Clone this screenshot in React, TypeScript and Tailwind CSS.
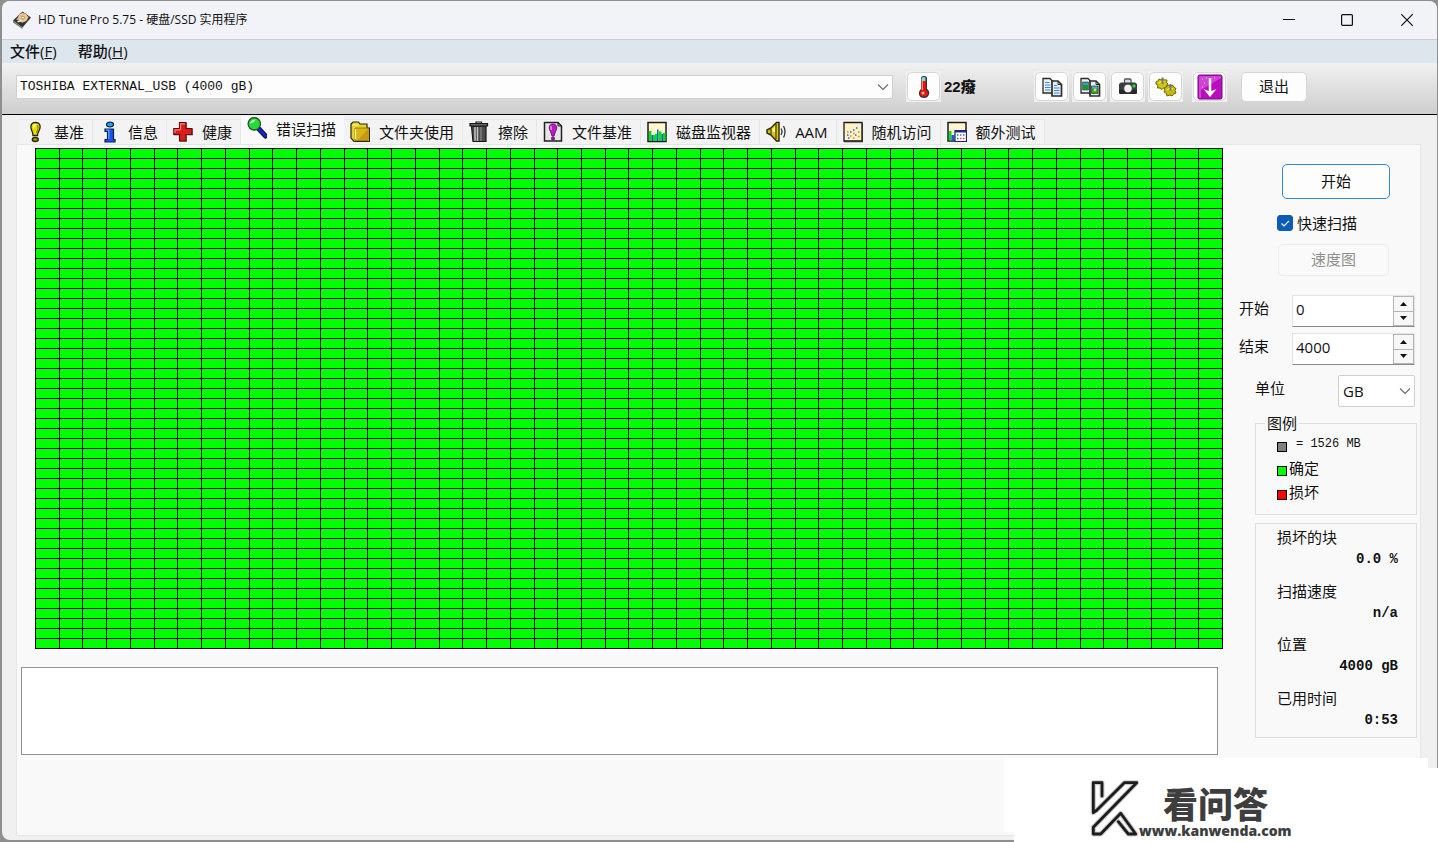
import { useState } from 'react';
import type { ReactNode } from 'react';

const COLS = 50;
const ROWS = 50;

/* ---------- toolbar / title icons ---------- */

function DiskIcon() {
    return (
        <svg width="18" height="18" viewBox="0 0 18 18">
            <path d="M0 9.500 L9.500 .5 L18 6.500 L9.500 16.500 Z" fill="#333" />
            <path d="M0 9.500 L9.500 16.500 V18 L0 11.500 Z" fill="#777" />
            <path d="M3 8.500 L9.500 1.500 L16 6.200 L9.500 12 Z" fill="#a9a49b" />
            <ellipse cx="10" cy="6.600" rx="4.800" ry="4.300" fill="#f0c48a" />
            <ellipse cx="10" cy="6.600" rx="1.500" ry="1.400" fill="#fff" stroke="#a6783d" strokeWidth=".8" />
            <path d="M4.500 11 L8.500 9.500" stroke="#fff" strokeWidth="1.300" />
        </svg>
    );
}

function ThermometerIcon() {
    return (
        <svg width="16" height="24" viewBox="0 0 16 24">
            <path d="M5 3 Q5 1 8 1 Q11 1 11 3 V14 Q14 16 13 19.500 Q11.500 23 8 23 Q4 23 3 19.500 Q2.500 16 5 14 Z" fill="#333" />
            <path d="M5.500 3 Q7 1.500 9.500 2.500 V7 H5.500 Z" fill="#7fd6dc" />
            <path d="M5.500 6 H9.800 V15 Q12.500 16.500 12 19 Q10.800 21.800 8 21.800 Q5 21.800 4 19 Q3.600 16.500 5.500 15 Z" fill="#e3170d" />
            <path d="M5.500 6 H7 V15 H5.500 Z" fill="#ff7a6a" />
            <circle cx="7" cy="18" r="1.500" fill="#ffb3aa" />
        </svg>
    );
}

function CopyIcon({ picture = false }: { picture?: boolean }) {
    return (
        <svg width="22" height="22" viewBox="0 0 22 22">
            <path d="M2 2.500 H9 L12 5.500 V17 H2 Z" fill="#eef1f4" stroke="#2c2c2c" strokeWidth="1.300" />
            <path d="M11 5 H17 L20.500 8.500 V20 H11 Z" fill="#e9edf1" stroke="#2c2c2c" strokeWidth="1.700" />
            <path d="M17 5 V8.500 H20.500" fill="none" stroke="#2c2c2c" />
            {picture ? (
                <>
                    <path d="M3.500 6 H9.500 V14 H3.500 Z" fill="#0e9d26" stroke="#555" strokeWidth=".7" />
                    <path d="M4 7 H9 V9 H4 Z" fill="#3894ef" />
                    <path d="M12.500 10 H19 V17.500 H12.500 Z" fill="#13b42b" stroke="#333" strokeWidth=".7" />
                    <path d="M13 10.500 H18.500 V12.500 H13 Z" fill="#4aa3f5" />
                    <circle cx="16" cy="14" r="1.400" fill="#f5d532" />
                    <path d="M17.500 15.500 L19 14.500 V17 Z" fill="#e32" />
                </>
            ) : (
                <>
                    <path d="M4 6.500 H8.500 M4 9 H9.500 M4 11.500 H9.500 M4 14 H9.500" stroke="#2f8ae0" strokeWidth="1.200" />
                    <path d="M13 9.500 H16 M13 12 H18.500 M13 14.500 H18.500 M13 17 H18.500" stroke="#2f8ae0" strokeWidth="1.200" />
                </>
            )}
        </svg>
    );
}

function CameraIcon() {
    return (
        <svg width="22" height="22" viewBox="0 0 22 22">
            <path d="M7.500 7 V4 Q7.500 3 8.500 3 H13 Q14 3 14 4 V7" fill="#ddd" stroke="#555" strokeWidth="1.300" />
            <path d="M2 8 L4 6.500 H18 L20 8 V17 L19 18 H3 L2 17 Z" fill="#3a3d3d" />
            <path d="M2 14 H20 V17 L19 18 H3 L2 17 Z" fill="#262828" />
            <circle cx="11" cy="12.500" r="4.600" fill="#555" />
            <circle cx="11" cy="12.500" r="3.700" fill="#f7f7f7" />
            <circle cx="17" cy="10" r="1.700" fill="#19e031" />
        </svg>
    );
}

function GearsIcon() {
    return (
        <svg width="22" height="22" viewBox="0 0 22 22">
            <g stroke="#6c6700" strokeWidth="1">
                <path d="M1 6 L3 5 L4 3 L6 4 L8 2.500 L9.500 4 L12 4 L11.500 6.500 L13 8 L11.500 10 L11 12.500 L8.500 12 L7 13.500 L5 12 L2.500 12 L3 9.500 L1 8 Z" fill="#cfc410" />
                <path d="M9 12 L11.500 11 L13 9 L15 10 L17.500 9 L18.500 11 L21 12.500 L20 14.500 L21 17 L18.500 18 L17 20 L15 19 L12 20 L11.500 17.500 L9 16 L10 14 Z" fill="#c5bb0c" />
            </g>
            <path d="M4 7 Q6 5 9 6 M12 14 Q15 11.500 18 13" fill="none" stroke="#f3ef6d" strokeWidth="1.300" />
            <path d="M7.500 1.500 V8" stroke="#777" strokeWidth="2" />
            <path d="M15.500 8 V14.500" stroke="#777" strokeWidth="2" />
        </svg>
    );
}

function DownloadIcon() {
    return (
        <svg width="26" height="26" viewBox="0 0 26 26">
            <rect x="1" y="1" width="24" height="24" rx="1.500" fill="#b70fc0" stroke="#740a7c" />
            <path d="M2 2 H24 V4 L4 16 V24 H2 Z" fill="#d658dc" opacity=".75" />
            <path d="M5 5 h1 M9 4 h1 M7 9 h1 M5 13 h1 M17 4 h1" stroke="#f4b9f6" strokeWidth="1" />
            <path d="M13 4 V18" stroke="#fff" strokeWidth="2.500" />
            <path d="M6.500 15 L13 17.500 L19.500 15 L13 23 Z" fill="#fff" />
        </svg>
    );
}

/* ---------- tab icons, all 20x22 ---------- */

function TabSvg({ children }: { children: ReactNode }) {
    return (
        <svg width="20" height="22" viewBox="0 0 20 22" className="shrink-0">
            {children}
        </svg>
    );
}

const BulbIcon = (
    <TabSvg>
        <path d="M10.500 1.500 C6.500 1.500 5.500 4 6 7 C6.500 10 8 11 8 14.500 H12.500 C12.500 11 14.500 10 15 7 C15.500 4 14.500 1.500 10.500 1.500 Z" fill="#e8dc08" stroke="#26240a" strokeWidth="1.300" />
        <path d="M8 4 Q9.500 2.500 11 3.500 L9 8 Z" fill="#fffba0" />
        <path d="M12.500 4 Q14 8 11.500 12" fill="none" stroke="#98900a" strokeWidth="1.300" />
        <ellipse cx="10.300" cy="18.500" rx="3" ry="2" fill="#a39b0b" stroke="#26240a" strokeWidth="1.300" />
    </TabSvg>
);

const InfoIcon = (
    <TabSvg>
        <ellipse cx="11" cy="3.500" rx="3.500" ry="2.300" fill="#19a8f2" stroke="#14264d" strokeWidth="1.200" />
        <path d="M6 8 H14.500 V18.500 H16 V21 H6 V18.500 H8.500 V10.500 H6 Z" fill="#1e52ee" stroke="#10214a" strokeWidth="1.200" />
        <path d="M7 9 H9.800 V18" fill="none" stroke="#47b5ff" strokeWidth="1.200" />
    </TabSvg>
);

const HealthIcon = (
    <TabSvg>
        <path d="M7 2 H14 V8 H20 V14.500 H14 V21 H7 V14.500 H1 V8 H7 Z" fill="#555" opacity=".6" />
        <path d="M6.500 1.500 H13 V7.500 H19 V13.500 H13 V20 H6.500 V13.500 H.8 V7.500 H6.500 Z" fill="#dd1c1c" stroke="#5b0d0d" strokeWidth="1.200" />
        <path d="M7.500 8.500 V2.800 H12 M2 12 V8.800 H7.500" fill="none" stroke="#ff7e76" strokeWidth="1.200" />
    </TabSvg>
);

const SearchIcon = (
    <TabSvg>
        <path d="M12 12 L18.500 19" stroke="#151526" strokeWidth="5" strokeLinecap="round" />
        <path d="M12 12 L18.300 18.800" stroke="#1522cf" strokeWidth="3" strokeLinecap="round" />
        <circle cx="7.300" cy="6.800" r="6.200" fill="#28d93a" stroke="#24532a" strokeWidth="1.300" />
        <path d="M3 6.500 Q4 2.500 8.500 2.500 Q7 6 3 6.500 Z" fill="#b9ffbf" />
    </TabSvg>
);

const FolderIcon = (
    <TabSvg>
        <path d="M1 3 L3 1 H8.500 L10 3 H17 V7 H19.500 V20.500 H4 L1 17 Z" fill="#e6d22b" stroke="#2c270a" strokeWidth="1.200" />
        <path d="M5 7 H18 V19.500 H5 Z" fill="#d9b51d" stroke="#8b7410" strokeWidth=".8" />
        <path d="M2.500 4 H8.500 M5.500 8 V18" stroke="#fff6a0" strokeWidth="1.200" />
        <path d="M17 9 L8 19 H17.500 Z" fill="#c39a12" />
    </TabSvg>
);

const TrashIcon = (
    <TabSvg>
        <path d="M2.500 5 H17 V20.500 H4 Z" fill="#4c4c4c" stroke="#161616" strokeWidth="1.200" />
        <path d="M6 6 V20 M8.500 6 V20" stroke="#c2c2c2" strokeWidth="1.500" />
        <path d="M12 6 V20" stroke="#8a8a8a" strokeWidth="1.300" />
        <path d="M1 2.500 H18.500 V5 H1 Z" fill="#666" stroke="#161616" strokeWidth="1.200" />
        <path d="M7 2.500 V1 H12.500 V2.500" fill="none" stroke="#161616" strokeWidth="1.200" />
    </TabSvg>
);

const FileBenchIcon = (
    <TabSvg>
        <path d="M1.500 1.500 H15 L18.500 5 V20 H1.500 Z" fill="#e6e6e6" stroke="#222" strokeWidth="1.500" />
        <path d="M15 1.500 V5 H18.500" fill="none" stroke="#222" />
        <path d="M10 3 C5.500 3 5.500 8 7.500 10.500 L9 15 H11 L12.500 10.500 C14.500 8 14.500 3 10 3 Z" fill="#c316c9" stroke="#4e0b52" strokeWidth=".8" />
        <path d="M8 5 V9" stroke="#f3a9f5" strokeWidth="1.300" />
        <circle cx="10" cy="17.500" r="1.700" fill="#a30fa9" stroke="#4e0b52" strokeWidth=".6" />
    </TabSvg>
);

const MonitorIcon = (
    <TabSvg>
        <path d="M1 1.500 H19 V20.500 H1 Z" fill="#fdf8cc" stroke="#1c1c1c" strokeWidth="1.500" />
        <path d="M2 10 H4.500 V20 H2 Z M8 13 H10 V20 H8 Z M12 10.500 H14.500 V20 H12 Z M16 12 H18.500 V20 H16 Z" fill="#00df19" />
        <path d="M4.500 14 H6 V20 H4.500 Z M10 8.500 H11.500 V20 H10 Z M14.500 13 H16 V20 H14.500 Z" fill="#1556ed" />
        <path d="M6 14 H8 V20 H6 Z M11.500 10.500 H12.500 V20 H11.500 Z" fill="#00df19" />
    </TabSvg>
);

const SpeakerIcon = (
    <TabSvg>
        <path d="M1 9 L5 7 L10.500 1.500 H13 V20 H10.500 L5 14 L1 12 Z" fill="#d9c60b" stroke="#29250a" strokeWidth="1.400" />
        <path d="M5 8 V13.500 M10 3 V18" stroke="#29250a" />
        <path d="M6.500 8 L9 5.500 V11 H6.500 Z" fill="#fff694" />
        <path d="M15 7.500 Q17 10.500 15 14 M17.500 5 Q20.500 10.500 17.500 16.500" fill="none" stroke="#333" strokeWidth="1.300" />
    </TabSvg>
);

const RandomIcon = (
    <TabSvg>
        <path d="M1 1.500 H19 V20 H1 Z" fill="#fdf3c4" stroke="#1c1c1c" strokeWidth="1.300" />
        <path d="M1 20.500 H19.500 V2" fill="none" stroke="#333" strokeWidth="1.300" />
        <path d="M4 14 h1.500 M7 11 h1.500 M10 9 h1.500 M13 7 h1.500 M12 14 h1.500 M5 17 h1.500" stroke="#2f63e8" strokeWidth="1.500" />
        <path d="M4 11 h1.500 M7 15 h1.500 M10 12.500 h1.500 M15 11 h1.500 M15 15.500 h1.500 M10 17 h1.500" stroke="#f07b2a" strokeWidth="1.500" />
    </TabSvg>
);

const ExtraIcon = (
    <TabSvg>
        <path d="M1 1.500 H19 V20 H1 Z" fill="#fdf8cc" stroke="#1c1c1c" strokeWidth="1.500" />
        <path d="M2 10 H4.500 V19.500 H2 Z" fill="#00df19" />
        <path d="M4.500 14 H7.500 V19.500 H4.500 Z" fill="#1556ed" />
        <path d="M8 9.500 H19.500 V20.500 H8 Z" fill="#fff" stroke="#1b2350" strokeWidth="1.200" />
        <path d="M8 10.500 H19" stroke="#1b2b9d" strokeWidth="2" />
        <path d="M10 14 h1.500 M13 14 h1.500 M16 14 h1.500 M10 17.500 h1.500" stroke="#3c64d8" strokeWidth="1.500" />
        <path d="M13 17.500 h1.500 M16 17.500 h1.500" stroke="#e24b3a" strokeWidth="1.500" />
    </TabSvg>
);

const tabs = [
    { label: '基准', icon: BulbIcon },
    { label: '信息', icon: InfoIcon },
    { label: '健康', icon: HealthIcon },
    { label: '错误扫描', icon: SearchIcon },
    { label: '文件夹使用', icon: FolderIcon },
    { label: '擦除', icon: TrashIcon },
    { label: '文件基准', icon: FileBenchIcon },
    { label: '磁盘监视器', icon: MonitorIcon },
    { label: 'AAM', icon: SpeakerIcon },
    { label: '随机访问', icon: RandomIcon },
    { label: '额外测试', icon: ExtraIcon },
];

/* ---------- small controls ---------- */

function Chevron() {
    return (
        <svg width="12" height="8" viewBox="0 0 12 8" className="pointer-events-none absolute top-1/2 right-1 -translate-y-1/2">
            <path d="M1 1.500 L6 6.500 L11 1.500" fill="none" stroke="#6b6b6b" strokeWidth="1.100" />
        </svg>
    );
}

function ToolButton({ label, children }: { label: string; children: ReactNode }) {
    return (
        <div className="bg-[#f0f0f0] p-px">
            <button
                aria-label={label}
                className="flex h-[29px] w-[33px] items-center justify-center rounded-[5px] border border-[#d6d6d6] bg-[#fdfdfd]"
            >
                {children}
            </button>
        </div>
    );
}

function SpinField({ id, label, initial }: { id: string; label: string; initial: number }) {
    const [value, setValue] = useState(String(initial));
    const step = (n: number) => setValue(String(Math.max(0, Number(value) + n)));

    return (
        <div className="flex items-center justify-between pr-[2px]">
            <label htmlFor={id} className="pb-[6px]">{label}</label>
            <div className="flex h-8 w-[123px] border border-[#e3e3e3] border-b-[#8a8a8a] bg-white">
                <input
                    id={id}
                    value={value}
                    onChange={(e) => setValue(e.target.value)}
                    className="w-0 flex-1 px-[3px] pb-1 outline-none"
                />
                <div className="flex w-[21px] flex-col border border-[#b5b5b5] bg-[#f7f7f7]">
                    <button aria-label={label + ' +'} onClick={() => step(1)} className="flex flex-1 items-center justify-center border-b border-[#b5b5b5]">
                        <svg width="7" height="4" viewBox="0 0 7 4"><path d="M0 4 L3.500 0 L7 4 Z" fill="#111" /></svg>
                    </button>
                    <button aria-label={label + ' -'} onClick={() => step(-1)} className="flex flex-1 items-center justify-center">
                        <svg width="7" height="4" viewBox="0 0 7 4"><path d="M0 0 L3.500 4 L7 0 Z" fill="#111" /></svg>
                    </button>
                </div>
            </div>
        </div>
    );
}

function Stat({ label, value }: { label: string; value: string }) {
    return (
        <div>
            <dt className="leading-6">{label}</dt>
            <dd className="text-right font-['Liberation_Mono','Noto_Sans_CJK_SC',monospace] text-[14px] leading-5 font-bold">{value}</dd>
        </div>
    );
}

/* ---------- main sections ---------- */

function TitleBar() {
    return (
        <header className="flex h-[39px] items-center justify-between rounded-t-lg border-b border-[#c9ced4] bg-[#f1f3f8] pl-[11px]">
            <div className="flex items-center gap-[7px] text-[12px]">
                <DiskIcon />
                <h1>HD Tune Pro 5.75 - 硬盘/SSD 实用程序</h1>
            </div>
            <div className="flex h-full">
                <button aria-label="最小化" className="flex w-[58px] items-center justify-center">
                    <svg width="12" height="12" viewBox="0 0 12 12"><path d="M0 5.500 H12" stroke="#111" /></svg>
                </button>
                <button aria-label="最大化" className="flex w-[58px] items-center justify-center">
                    <svg width="12" height="12" viewBox="0 0 12 12"><rect x=".6" y=".6" width="10.800" height="10.800" rx="1" fill="none" stroke="#111" strokeWidth="1.200" /></svg>
                </button>
                <button aria-label="关闭" className="flex w-[61px] items-center justify-center">
                    <svg width="12" height="12" viewBox="0 0 12 12"><path d="M0 0 L12 12 M12 0 L0 12" stroke="#111" strokeWidth="1.200" /></svg>
                </button>
            </div>
        </header>
    );
}

function MenuBar() {
    return (
        <nav className="flex h-[23px] items-center gap-[21px] bg-[#dde5ed] pb-[2px] pl-2 font-medium">
            <button>文件(<u>F</u>)</button>
            <button>帮助(<u>H</u>)</button>
        </nav>
    );
}

function Toolbar() {
    return (
        <div className="flex h-[52px] items-center border-b border-black bg-linear-to-b from-[#f1f1f1] to-[#cecece] pr-[130px] pb-1 pl-[14px]">
            <div className="relative flex-1">
                <select
                    aria-label="硬盘"
                    className="h-6 w-full appearance-none border border-[#d0d0d0] bg-[#fdfdfd] px-[3px] font-['Liberation_Mono','Noto_Sans_CJK_SC',monospace] text-[13px] outline-none"
                >
                    <option>TOSHIBA EXTERNAL_USB (4000 gB)</option>
                </select>
                <Chevron />
            </div>
            <div className="ml-[13px]">
                <ToolButton label="温度"><ThermometerIcon /></ToolButton>
            </div>
            <span className="ml-[3px] w-[90px] font-['Liberation_Sans','Noto_Sans_CJK_SC',sans-serif] font-black">22癈</span>
            <div className="flex gap-[3px]">
                <ToolButton label="复制文本"><CopyIcon /></ToolButton>
                <ToolButton label="复制图像"><CopyIcon picture /></ToolButton>
                <ToolButton label="截图"><CameraIcon /></ToolButton>
                <ToolButton label="选项"><GearsIcon /></ToolButton>
            </div>
            <div className="ml-[9px]">
                <ToolButton label="下载"><DownloadIcon /></ToolButton>
            </div>
            <button className="ml-[14px] h-[30px] w-[66px] rounded-[5px] border border-[#d6d6d6] bg-[#fdfdfd] pb-[2px]">退出</button>
        </div>
    );
}

function TabBar({ active, onSelect }: { active: string; onSelect: (label: string) => void }) {
    return (
        <div role="tablist" className="flex h-[29px] items-end pl-[3px]">
            {tabs.map((tab) => {
                const isActive = tab.label === active;
                return (
                    <button
                        key={tab.label}
                        role="tab"
                        aria-selected={isActive}
                        onClick={() => onSelect(tab.label)}
                        className={
                            isActive
                                ? 'flex h-[28px] items-start gap-[9px] bg-[#f9f9f9] pt-px pr-2 pl-[6px] leading-6 whitespace-nowrap'
                                : 'flex h-[25px] items-center gap-[9px] border-t border-r border-[#e6e6e6] bg-[#f3f3f3] pr-2 pl-[6px] whitespace-nowrap'
                        }
                    >
                        {tab.icon}
                        {tab.label}
                    </button>
                );
            })}
        </div>
    );
}

function BlockMap() {
    return (
        <div className="grid grid-cols-[repeat(50,minmax(0,1fr))] border-t border-l border-black">
            {Array.from({ length: COLS * ROWS }, (_, i) => (
                <div key={i} className="h-[10px] border-r border-b border-black bg-[#00ff00]" />
            ))}
        </div>
    );
}

function Sidebar() {
    const [quick, setQuick] = useState(true);

    return (
        <aside className="flex w-[197px] shrink-0 flex-col pt-[19px] pr-[3px] pl-4">
            <button className="ml-[43px] h-[35px] w-[108px] rounded-[5px] border border-[#2b8ade] bg-[#fdfdfd] pb-[2px]">开始</button>
            <label className="mt-3 ml-[38px] flex h-6 items-center gap-1">
                <span className="relative flex">
                    <input
                        type="checkbox"
                        checked={quick}
                        onChange={(e) => setQuick(e.target.checked)}
                        className="size-4 appearance-none rounded-[3px] border border-[#0a5cb8] bg-white checked:bg-[#0a5cb8]"
                    />
                    {quick && (
                        <svg width="16" height="16" viewBox="0 0 16 16" className="pointer-events-none absolute inset-0">
                            <path d="M4.500 8.500 L7 11 L12 6" fill="none" stroke="#fff" strokeWidth="1.200" />
                        </svg>
                    )}
                </span>
                快速扫描
            </label>
            <button disabled className="mt-[9px] ml-[39px] h-8 w-[111px] rounded-[5px] border border-[#ececec] bg-[#fafafa] pb-[2px] text-[#8f8f8f]">速度图</button>

            <div className="mt-[19px] flex flex-col gap-[6px]">
                <SpinField id="from" label="开始" initial={0} />
                <SpinField id="to" label="结束" initial={4000} />
            </div>
            <div className="mt-[10px] flex items-center justify-between pr-[2px] pl-4">
                <label htmlFor="unit" className="pb-[6px]">单位</label>
                <div className="relative">
                    <select id="unit" className="h-8 w-[77px] appearance-none rounded-[2px] border border-[#cfcfcf] bg-white px-1 outline-none">
                        <option>GB</option>
                        <option>MB</option>
                    </select>
                    <Chevron />
                </div>
            </div>

            <fieldset className="mt-1 ml-4 h-[104px] border border-[#dedede] pl-[21px]">
                <legend className="-ml-3 px-[2px] leading-6">图例</legend>
                <ul>
                    <li className="flex h-6 items-center gap-[9px] font-['Liberation_Mono','Noto_Sans_CJK_SC',monospace] text-[12px]">
                        <i className="size-[10px] border border-black bg-[#808080]" />
                        <span className="pb-[6px]">= 1526 MB</span>
                    </li>
                    <li className="flex h-6 items-center gap-[2px]">
                        <i className="size-[10px] border border-black bg-[#00ff00]" />
                        <span className="pb-[6px]">确定</span>
                    </li>
                    <li className="flex h-6 items-center gap-[2px]">
                        <i className="size-[10px] border border-black bg-[#ff0000]" />
                        <span className="pb-[6px]">损坏</span>
                    </li>
                </ul>
            </fieldset>

            <dl className="mt-2 ml-4 flex h-[215px] flex-col justify-between border border-[#dedede] pt-px pr-[18px] pb-[7px] pl-[21px]">
                <Stat label="损坏的块" value="0.0 %" />
                <Stat label="扫描速度" value="n/a" />
                <Stat label="位置" value="4000 gB" />
                <Stat label="已用时间" value="0:53" />
            </dl>
        </aside>
    );
}

function Watermark() {
    const k = 'M13 18 V4.700 H4.300 V34.700 L8 32 L35.300 4.700 H47.700 L4.300 49.300 V56 H11.700 L31.700 35.300 L46.700 56 H39.300 L29.300 43.700';

    return (
        <div className="absolute right-0 bottom-0">
            <div className="absolute right-[10px] bottom-[10px] h-[74px] w-[424px] bg-white" />
            <div className="relative flex h-[74px] w-[424px] bg-white pt-[10px] pl-[75px]">
                <svg width="50" height="62" viewBox="0 0 50 62" className="shrink-0" fill="none" strokeLinejoin="round" strokeLinecap="round">
                    <path d={k} stroke="#c9c9c9" strokeWidth="5" />
                    <path d={k} stroke="#1c1c1c" strokeWidth="2.800" />
                </svg>
                <div className="flex flex-col pt-[3px] text-[#3e3e3e]">
                    <strong className="pl-6 font-['Noto_Sans_CJK_SC',sans-serif] text-[35px] leading-[44px] font-black">看问答</strong>
                    <a href="#" className="text-[14px] leading-3 font-extrabold">www.kanwenda.com</a>
                </div>
            </div>
        </div>
    );
}

export default function App() {
    const [tab, setTab] = useState('错误扫描');

    return (
        <div lang="zh-CN" className="relative flex min-h-screen flex-col bg-[#8f8f8f] pt-px pr-px pb-[2px] pl-[2px] font-['Open_Sans','Noto_Sans_CJK_SC',sans-serif] text-[15px] leading-5 text-[#111]">
            <div className="flex flex-1 flex-col rounded-lg bg-[#f0f0f0]">
                <TitleBar />
                <MenuBar />
                <Toolbar />
                <div className="flex flex-1 flex-col pr-4 pb-1 pl-[14px]">
                    <TabBar active={tab} onSelect={setTab} />
                    <main className="flex flex-1 border border-[#e6e6e6] bg-[#f9f9f9]">
                        <div className="min-w-0 flex-1 pt-[3px]">
                            <div className="pl-[18px]">
                                <BlockMap />
                            </div>
                            <div className="mt-[18px] flex pr-[5px] pl-1">
                                <textarea aria-label="日志" readOnly className="h-[88px] w-full resize-none border border-[#8d939b] bg-white outline-none" />
                            </div>
                        </div>
                        <Sidebar />
                    </main>
                </div>
            </div>
            <Watermark />
        </div>
    );
}
